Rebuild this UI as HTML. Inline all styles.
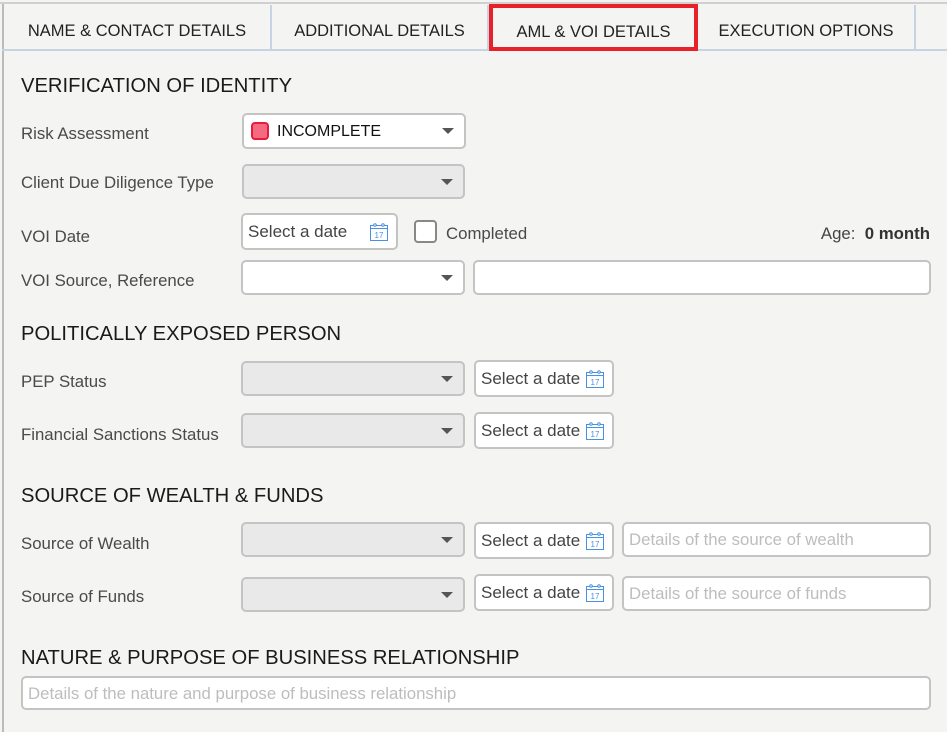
<!DOCTYPE html>
<html><head><meta charset="utf-8"><style>
*{box-sizing:border-box;margin:0;padding:0}
body{width:947px;height:732px;background:#f4f4f3;font-family:"Liberation Sans",sans-serif;position:relative;overflow:hidden;color:#444}
.a{position:absolute}
.top{left:0;top:2px;width:947px;height:2px;background:#d0d0d0}
.tabline{left:2px;top:49px;width:945px;height:2px;background:#c5d3e2}
.lb{left:2px;top:4px;width:2px;height:728px;background:#bbb}
.tab{top:5px;height:45px;border-right:2px solid #c5d3e2;font-size:16.5px;color:#222;text-align:center;line-height:52px}
.red{left:489px;top:4px;width:209px;height:47px;border:4px solid #e8202a}
.h{left:21px;font-size:20.2px;color:#1a1a1a}
.l{left:21px;font-size:16.8px;color:#4a4a4a}
.box{border:2px solid #c4c4c4;border-radius:5px;background:#fff}
.g{background:#e9e9e9}
.arr{position:absolute;right:10px;top:50%;margin-top:-3px;border-left:6px solid transparent;border-right:6px solid transparent;border-top:6px solid #555}
.d{font-size:17px;color:#444;padding-left:5px;line-height:34px}
.cal{position:absolute;right:7px;top:50%;margin-top:-10px}
.ph{font-size:16.8px;color:#bdbdbd;padding-left:5px;line-height:32px}
</style></head><body>
<div class="a top"></div>
<div class="a lb"></div>
<div class="a tab" style="left:4px;width:268px">NAME &amp; CONTACT DETAILS</div>
<div class="a tab" style="left:272px;width:217px">ADDITIONAL DETAILS</div>
<div class="a tab" style="left:489px;width:209px;border-right:none;line-height:54px">AML &amp; VOI DETAILS</div>
<div class="a tab" style="left:698px;width:218px">EXECUTION OPTIONS</div>
<div class="a tabline"></div>
<div class="a red"></div>

<div class="a h" style="top:75px">VERIFICATION OF IDENTITY</div>
<div class="a l" style="top:124px">Risk Assessment</div>
<div class="a box" style="left:242px;top:113px;width:224px;height:36px"><div class="a" style="left:7px;top:7px;width:18px;height:18px;border:2px solid #e51c3c;background:#f56a80;border-radius:4px"></div><div class="a" style="left:33px;top:8px;font-size:16px;color:#111">INCOMPLETE</div><div class="arr"></div></div>
<div class="a l" style="top:173px">Client Due Diligence Type</div>
<div class="a box g" style="left:242px;top:164px;width:223px;height:35px"><div class="arr"></div></div>
<div class="a l" style="top:227px">VOI Date</div>
<div class="a box d" style="left:241px;top:213px;width:157px;height:37px">Select a date<svg class="cal" width="20" height="20" viewBox="0 0 20 20"><rect x="1.5" y="3.5" width="17" height="15" fill="none" stroke="#4a90e2"/><line x1="1.5" y1="6.5" x2="18.5" y2="6.5" stroke="#4a90e2"/><circle cx="6" cy="3" r="1.3" fill="#fff" stroke="#4a90e2"/><circle cx="14" cy="3" r="1.3" fill="#fff" stroke="#4a90e2"/><text x="10" y="16" font-size="8" fill="#4a90e2" text-anchor="middle" font-family="Liberation Sans">17</text></svg></div>
<div class="a" style="left:414px;top:220px;width:23px;height:23px;border:2px solid #888;border-radius:4px;background:#fff"></div>
<div class="a l" style="left:446px;top:224px">Completed</div>
<div class="a" style="right:17px;top:224px;font-size:16.8px;color:#444">Age:&nbsp; <b style="color:#333">0 month</b></div>
<div class="a l" style="top:271px">VOI Source, Reference</div>
<div class="a box" style="left:241px;top:260px;width:224px;height:35px"><div class="arr"></div></div>
<div class="a box" style="left:473px;top:260px;width:458px;height:35px"></div>

<div class="a h" style="top:323px">POLITICALLY EXPOSED PERSON</div>
<div class="a l" style="top:372px">PEP Status</div>
<div class="a box g" style="left:241px;top:361px;width:224px;height:35px"><div class="arr"></div></div>
<div class="a box d" style="left:474px;top:360px;width:140px;height:37px">Select a date<svg class="cal" width="20" height="20" viewBox="0 0 20 20"><rect x="1.5" y="3.5" width="17" height="15" fill="none" stroke="#4a90e2"/><line x1="1.5" y1="6.5" x2="18.5" y2="6.5" stroke="#4a90e2"/><circle cx="6" cy="3" r="1.3" fill="#fff" stroke="#4a90e2"/><circle cx="14" cy="3" r="1.3" fill="#fff" stroke="#4a90e2"/><text x="10" y="16" font-size="8" fill="#4a90e2" text-anchor="middle" font-family="Liberation Sans">17</text></svg></div>
<div class="a l" style="top:425px">Financial Sanctions Status</div>
<div class="a box g" style="left:241px;top:413px;width:224px;height:35px"><div class="arr"></div></div>
<div class="a box d" style="left:474px;top:412px;width:140px;height:37px">Select a date<svg class="cal" width="20" height="20" viewBox="0 0 20 20"><rect x="1.5" y="3.5" width="17" height="15" fill="none" stroke="#4a90e2"/><line x1="1.5" y1="6.5" x2="18.5" y2="6.5" stroke="#4a90e2"/><circle cx="6" cy="3" r="1.3" fill="#fff" stroke="#4a90e2"/><circle cx="14" cy="3" r="1.3" fill="#fff" stroke="#4a90e2"/><text x="10" y="16" font-size="8" fill="#4a90e2" text-anchor="middle" font-family="Liberation Sans">17</text></svg></div>

<div class="a h" style="top:485px">SOURCE OF WEALTH &amp; FUNDS</div>
<div class="a l" style="top:534px">Source of Wealth</div>
<div class="a box g" style="left:241px;top:522px;width:224px;height:35px"><div class="arr"></div></div>
<div class="a box d" style="left:474px;top:522px;width:140px;height:37px">Select a date<svg class="cal" width="20" height="20" viewBox="0 0 20 20"><rect x="1.5" y="3.5" width="17" height="15" fill="none" stroke="#4a90e2"/><line x1="1.5" y1="6.5" x2="18.5" y2="6.5" stroke="#4a90e2"/><circle cx="6" cy="3" r="1.3" fill="#fff" stroke="#4a90e2"/><circle cx="14" cy="3" r="1.3" fill="#fff" stroke="#4a90e2"/><text x="10" y="16" font-size="8" fill="#4a90e2" text-anchor="middle" font-family="Liberation Sans">17</text></svg></div>
<div class="a box ph" style="left:622px;top:522px;width:309px;height:35px">Details of the source of wealth</div>
<div class="a l" style="top:587px">Source of Funds</div>
<div class="a box g" style="left:241px;top:577px;width:224px;height:35px"><div class="arr"></div></div>
<div class="a box d" style="left:474px;top:574px;width:140px;height:37px">Select a date<svg class="cal" width="20" height="20" viewBox="0 0 20 20"><rect x="1.5" y="3.5" width="17" height="15" fill="none" stroke="#4a90e2"/><line x1="1.5" y1="6.5" x2="18.5" y2="6.5" stroke="#4a90e2"/><circle cx="6" cy="3" r="1.3" fill="#fff" stroke="#4a90e2"/><circle cx="14" cy="3" r="1.3" fill="#fff" stroke="#4a90e2"/><text x="10" y="16" font-size="8" fill="#4a90e2" text-anchor="middle" font-family="Liberation Sans">17</text></svg></div>
<div class="a box ph" style="left:622px;top:576px;width:309px;height:35px">Details of the source of funds</div>

<div class="a h" style="top:647px">NATURE &amp; PURPOSE OF BUSINESS RELATIONSHIP</div>
<div class="a box ph" style="left:21px;top:676px;width:910px;height:34px">Details of the nature and purpose of business relationship</div>
</body></html>
